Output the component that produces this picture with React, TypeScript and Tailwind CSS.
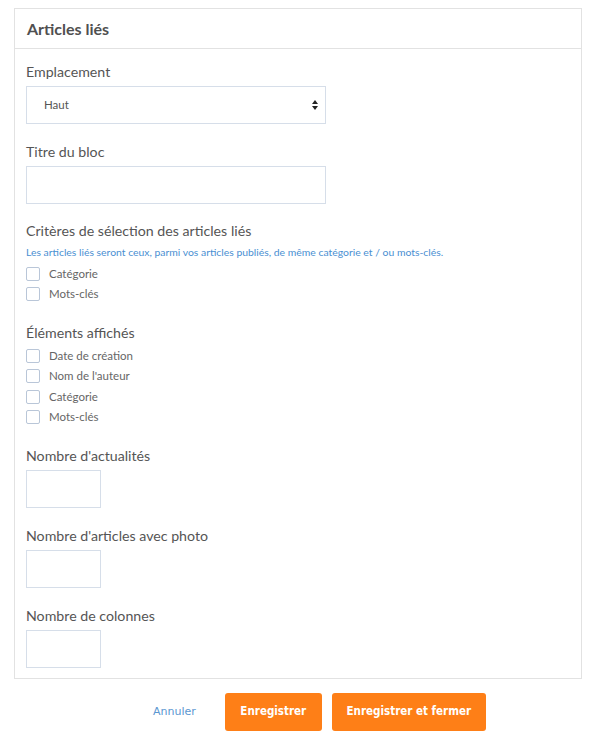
const font = { fontFamily: 'Lato, "Noto Sans", sans-serif' };

const Checkbox = ({ label }: { label: string }) => (
  <label className="flex items-center h-[20px] gap-[9px]">
    <span className="w-[14px] h-[14px] border border-[#b9c6d8] rounded-[2px] bg-white" />
    <span className="text-[11.5px] text-[#666]">{label}</span>
  </label>
);

const Label = ({ children }: { children: React.ReactNode }) => (
  <div className="text-[14.2px] leading-[20px] text-[#555] mb-[4px]">{children}</div>
);

const SmallInput = () => (
  <input className="block w-[75px] h-[38px] border border-[#d6dee9] outline-none" />
);

export default function App() {
  return (
    <div className="bg-white min-h-screen pt-[8px] px-[14px]" style={font}>
      <div className="w-[568px] border border-[#e2e2e2]">
        <div className="h-[40px] px-[12px] flex items-center border-b border-[#e2e2e2]">
          <h2 className="text-[16px] font-bold text-[#505050]">Articles liés</h2>
        </div>

        <div className="px-[11px] pt-[13px] pb-[10px]">
          <Label>Emplacement</Label>
          <div className="relative w-[300px] h-[38px] border border-[#d6dee9] flex items-center pl-[17px]">
            <span className="text-[11.5px] text-[#555]">Haut</span>
            <svg className="absolute right-[7px] top-[13px]" width="6" height="10" viewBox="0 0 6 10">
              <path d="M3 0 L6 4 L0 4 Z" fill="#222" />
              <path d="M3 10 L6 6 L0 6 Z" fill="#222" />
            </svg>
          </div>

          <div className="mt-[18px]">
            <Label>Titre du bloc</Label>
            <input className="block w-[300px] h-[38px] border border-[#d6dee9] outline-none" />
          </div>

          <div className="mt-[17px]">
            <div className="text-[14.2px] leading-[20px] text-[#555]">Critères de sélection des articles liés</div>
            <p className="mt-[3px] text-[10.4px] leading-[16px] text-[#4a8fd2]">
              Les articles liés seront ceux, parmi vos articles publiés, de même catégorie et / ou mots-clés.
            </p>
            <div className="mt-[4px]">
              <Checkbox label="Catégorie" />
              <Checkbox label="Mots-clés" />
            </div>
          </div>

          <div className="mt-[19px]">
            <div className="text-[14.2px] leading-[20px] text-[#555] mb-[3px]">Éléments affichés</div>
            <Checkbox label="Date de création" />
            <Checkbox label="Nom de l'auteur" />
            <div className="h-[1px]" />
            <Checkbox label="Catégorie" />
            <Checkbox label="Mots-clés" />
          </div>

          <div className="mt-[19px]">
            <Label>Nombre d'actualités</Label>
            <SmallInput />
          </div>

          <div className="mt-[18px]">
            <Label>Nombre d'articles avec photo</Label>
            <SmallInput />
          </div>

          <div className="mt-[18px]">
            <Label>Nombre de colonnes</Label>
            <SmallInput />
          </div>
        </div>
      </div>

      <div className="flex items-center mt-[14px] ml-[139px]">
        <button className="text-[11px] text-[#5b97d1] mr-[29px]" style={{ fontFamily: '"DejaVu Sans", sans-serif' }}>
          Annuler
        </button>
        <div className="flex" style={{ fontFamily: '"DejaVu Sans Condensed", "DejaVu Sans", sans-serif' }}>
          <button className="h-[38px] w-[97px] rounded-[3px] bg-[#fe7f17] text-white text-[11.5px] font-bold">
            Enregistrer
          </button>
          <button className="h-[38px] w-[154px] ml-[10px] rounded-[3px] bg-[#fe7f17] text-white text-[11.5px] font-bold">
            Enregistrer et fermer
          </button>
        </div>
      </div>
    </div>
  );
}
